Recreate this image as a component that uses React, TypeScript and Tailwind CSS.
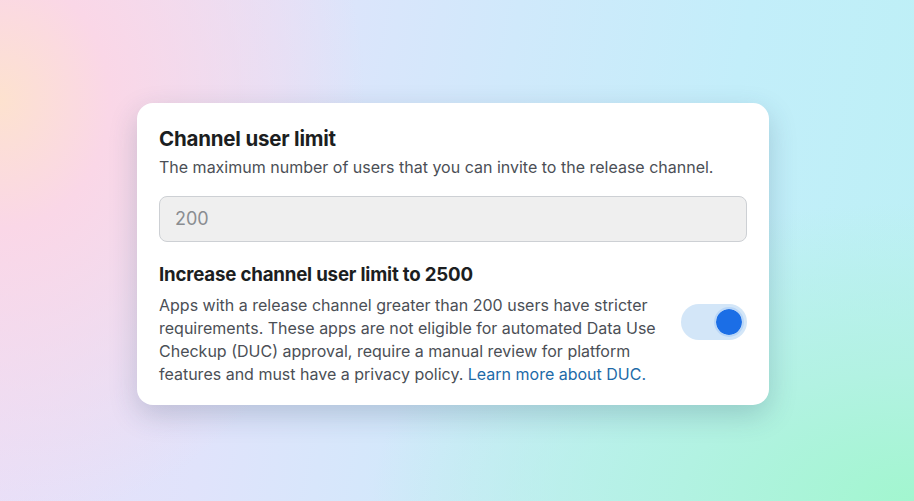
import { useState } from "react";

export default function App() {
  const [enabled, setEnabled] = useState(true);

  return (
    <div
      className="flex h-[501px] w-full items-center justify-center overflow-hidden bg-[radial-gradient(ellipse_40%_85%_at_0%_20%,#fde2cf_0%,#fad7e7_30%,transparent_100%),radial-gradient(ellipse_at_100%_100%,#a2f6cf_0%,#b2f2e2_18%,transparent_42%),linear-gradient(100deg,#ebdff8_0%,#e0e3fb_28%,#d0e9fb_52%,#c3eefa_75%,#bcf0f5_100%)] pr-[8px] pt-[6px] text-[#1c1e21]"
      style={{ fontFamily: "Inter, 'Liberation Sans', sans-serif" }}
    >
      <div className="flex w-[632px] flex-col rounded-[16px] bg-white px-[22px] pb-[19px] pt-[22px] shadow-[0_10px_28px_rgba(40,70,100,0.22)]">
        <h2 className="text-[20.5px] font-bold leading-[27px] tracking-[-0.2px]">
          Channel user limit
        </h2>
        <p className="mt-[4px] text-[16px] leading-[22px] text-[#4b4f56]">
          The maximum number of users that you can invite to the release channel.
        </p>

        <input
          type="text"
          disabled
          value="200"
          readOnly
          className="mt-[18px] h-[46px] w-full rounded-[8px] border border-[#cdd0d4] bg-[#efefef] px-[15px] text-[18px] text-[#8a8d91] outline-none"
        />

        <h3 className="mt-[21px] text-[18.7px] font-bold leading-[24px] tracking-[-0.2px]">
          Increase channel user limit to 2500
        </h3>
        <div className="mt-[7px] flex items-start justify-between">
          <p className="w-[505px] text-[16px] leading-[23px] text-[#4b4f56]">
            Apps with a release channel greater than 200 users have stricter
            requirements. These apps are not eligible for automated Data Use
            Checkup (DUC) approval, require a manual review for platform
            features and must have a privacy policy.{" "}
            <a href="#" className="text-[#1d6aa8]">
              Learn more about DUC.
            </a>
          </p>
          <button
            type="button"
            onClick={() => setEnabled((v) => !v)}
            aria-pressed={enabled}
            className={
              enabled
                ? "mt-[10px] flex h-[36px] w-[66px] items-center justify-end rounded-full bg-[#d3e6f8] px-[3px]"
                : "mt-[10px] flex h-[36px] w-[66px] items-center justify-start rounded-full bg-[#e4e6eb] px-[3px]"
            }
          >
            <span
              className={
                enabled
                  ? "h-[30px] w-[30px] rounded-full border-2 border-[#b9d6f7] bg-[#1b6ee6] bg-clip-padding"
                  : "h-[30px] w-[30px] rounded-full bg-white shadow"
              }
            />
          </button>
        </div>
      </div>
    </div>
  );
}
